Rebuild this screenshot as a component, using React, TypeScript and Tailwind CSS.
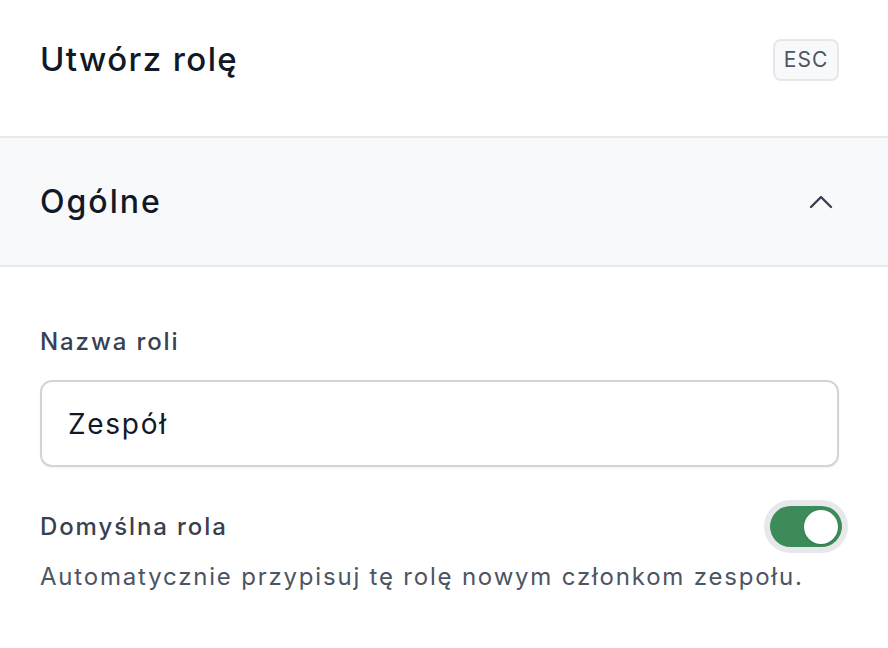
import { useState } from "react";

export default function App() {
  const [open, setOpen] = useState(true);
  const [name, setName] = useState("Zespół");
  const [isDefault, setIsDefault] = useState(true);

  return (
    <div className="min-h-screen w-full bg-white font-['Inter',sans-serif] text-[#111827]">
      {/* header */}
      <div className="flex h-[138px] items-center justify-between border-b-2 border-[#e7e8ec] pb-[16px] pl-10 pr-[49px]">
        <h1 className="text-[33px] font-medium tracking-[1.4px]">Utwórz rolę</h1>
        <kbd className="flex h-[42px] w-[66px] items-center justify-center rounded-lg border-2 border-[#e5e7eb] bg-[#f8f9fb] font-['Inter',sans-serif] text-[21px] tracking-[1px] text-[#4b5563]">
          ESC
        </kbd>
      </div>

      {/* section toggle */}
      <button
        onClick={() => setOpen(!open)}
        className="flex h-[129px] w-full items-center justify-between border-b-2 border-[#e7e8ec] bg-[#f8f9fb] pl-10 pr-[49px]"
      >
        <span className="text-[32px] font-medium tracking-[2px]">Ogólne</span>
        <svg
          width="24"
          height="24"
          viewBox="0 0 24 24"
          fill="none"
          stroke="#374151"
          strokeWidth="2.4"
          strokeLinecap="round"
          strokeLinejoin="round"
          className={`mr-[6px] ${open ? "" : "rotate-180"}`}
        >
          <path d="M2 17 L12 7 L22 17" />
        </svg>
      </button>

      {open && (
        <div className="pl-10 pr-[49px] pt-[59px]">
          <label className="block text-[24px] font-medium leading-[32px] tracking-[1.9px] text-[#374151]">
            Nazwa roli
          </label>
          <input
            value={name}
            onChange={(e) => setName(e.target.value)}
            className="mt-[22px] h-[87px] w-full rounded-xl border-2 border-[#d1d5db] bg-white px-[26px] text-[28px] tracking-[1.7px] text-[#111827] shadow-[0_1px_2px_rgba(0,0,0,0.05)] outline-none"
          />

          <div className="mt-[33px] flex items-center justify-between">
            <span className="text-[24px] font-medium tracking-[1.9px] text-[#374151]">Domyślna rola</span>
            <button
              onClick={() => setIsDefault(!isDefault)}
              className="-mr-[9px] rounded-full bg-[#e7e8ec] p-[6px]"
            >
              <span
                className={`flex h-[41px] w-[72px] items-center rounded-full px-[4px] transition ${
                  isDefault ? "justify-end bg-[#3d8b58]" : "justify-start bg-[#d1d5db]"
                }`}
              >
                <span className="h-[34px] w-[34px] rounded-full bg-white shadow-sm" />
              </span>
            </button>
          </div>
          <p className="mt-[6px] text-[24px] tracking-[1.8px] text-[#4b5563]">
            Automatycznie przypisuj tę rolę nowym członkom zespołu.
          </p>
        </div>
      )}
    </div>
  );
}
